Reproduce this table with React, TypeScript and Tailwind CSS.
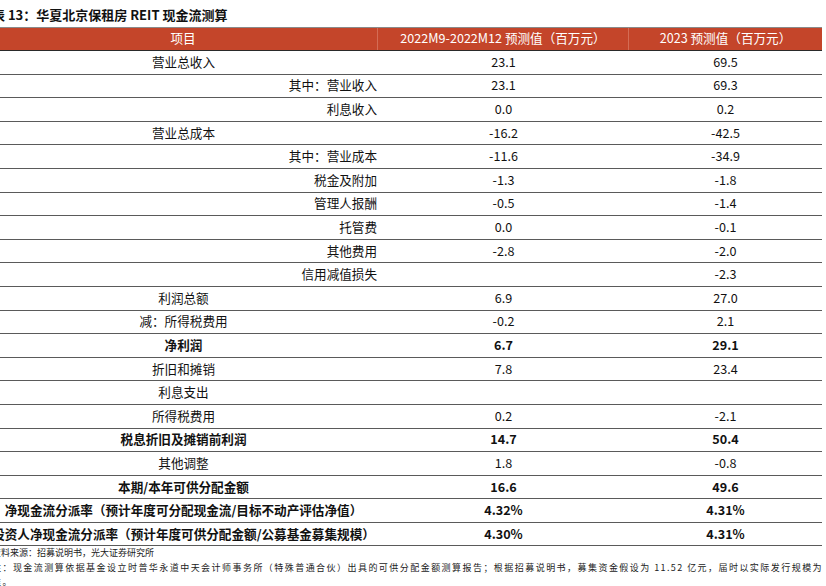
type Row = {
  label: string;
  a: string;
  b: string;
  align?: "center" | "right";
  bold?: boolean;
};

const rows: Row[] = [
  { label: "营业总收入", a: "23.1", b: "69.5" },
  { label: "其中：营业收入", a: "23.1", b: "69.3", align: "right" },
  { label: "利息收入", a: "0.0", b: "0.2", align: "right" },
  { label: "营业总成本", a: "-16.2", b: "-42.5" },
  { label: "其中：营业成本", a: "-11.6", b: "-34.9", align: "right" },
  { label: "税金及附加", a: "-1.3", b: "-1.8", align: "right" },
  { label: "管理人报酬", a: "-0.5", b: "-1.4", align: "right" },
  { label: "托管费", a: "0.0", b: "-0.1", align: "right" },
  { label: "其他费用", a: "-2.8", b: "-2.0", align: "right" },
  { label: "信用减值损失", a: "", b: "-2.3", align: "right" },
  { label: "利润总额", a: "6.9", b: "27.0" },
  { label: "减：所得税费用", a: "-0.2", b: "2.1" },
  { label: "净利润", a: "6.7", b: "29.1", bold: true },
  { label: "折旧和摊销", a: "7.8", b: "23.4" },
  { label: "利息支出", a: "", b: "" },
  { label: "所得税费用", a: "0.2", b: "-2.1" },
  { label: "税息折旧及摊销前利润", a: "14.7", b: "50.4", bold: true },
  { label: "其他调整", a: "1.8", b: "-0.8" },
  { label: "本期/本年可供分配金额", a: "16.6", b: "49.6", bold: true },
  {
    label: "净现金流分派率（预计年度可分配现金流/目标不动产评估净值）",
    a: "4.32%",
    b: "4.31%",
    bold: true,
  },
  {
    label: "投资人净现金流分派率（预计年度可供分配金额/公募基金募集规模）",
    a: "4.30%",
    b: "4.31%",
    bold: true,
  },
];

export default function App() {
  return (
    <div
      className="h-[586px] w-[826px] overflow-hidden bg-white text-[#111]"
      style={{ fontFamily: '"Noto Sans CJK SC", "Noto Sans", sans-serif' }}
    >
      <div className="-ml-[8px] w-[831px]">
        <div className="h-[26.5px] pt-[5px] text-[13px] font-bold leading-[20px]">
          表 13：华夏北京保租房 REIT 现金流测算
        </div>

        <div className="-ml-[3px] w-[833px] text-[12.6px]">
          <div className="flex h-[24.5px] border-t border-b border-t-[#8a8a8a] border-b-[#2a2a2a] bg-[#c4452a] text-white">
            <div className="flex w-[389px] items-center justify-center border-r border-[#d46c55]">项目</div>
            <div className="flex w-[251px] items-center justify-center border-r border-[#d46c55]">
              2022M9-2022M12 预测值（百万元）
            </div>
            <div className="flex w-[193px] items-center justify-center">2023 预测值（百万元）</div>
          </div>

          {rows.map((row, i) => (
            <div
              key={i}
              className={`flex h-[23.6px] border-b border-[#5a5a5a] ${row.bold ? "font-bold" : ""}`}
            >
              <div
                className={`flex w-[389px] items-center whitespace-nowrap ${
                  row.align === "right" ? "justify-end pr-[1px]" : "justify-center"
                }`}
              >
                {row.label}
              </div>
              <div className="flex w-[251px] items-center justify-center">{row.a}</div>
              <div className="flex w-[193px] items-center justify-center">{row.b}</div>
            </div>
          ))}
        </div>

        <div className="text-[9px] leading-[14.5px] text-[#222]">
          <p>资料来源：招募说明书，光大证券研究所</p>
          <p className="text-justify tracking-[1.4px]">
            注：现金流测算依据基金设立时普华永道中天会计师事务所（特殊普通合伙）出具的可供分配金额测算报告；根据招募说明书，募集资金假设为 11.52 亿元，届时以实际发行规模为准。
          </p>
        </div>
      </div>
    </div>
  );
}
